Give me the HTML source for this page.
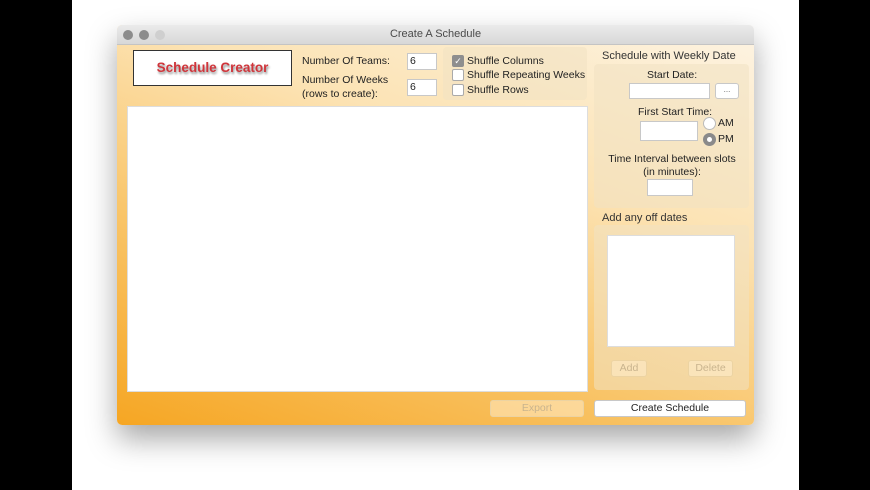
<!DOCTYPE html>
<html><head><style>
body{margin:0;width:870px;height:490px;background:#000;position:relative;overflow:hidden;font-family:"Liberation Sans",sans-serif;font-size:10.5px;color:#222}
.stage{position:absolute;left:72px;top:0;width:727px;height:490px;background:#fff}
.win{position:absolute;left:117px;top:25px;width:637px;height:400px;border-radius:5px;overflow:hidden;box-shadow:0 14px 30px rgba(0,0,0,.35);background:linear-gradient(20deg,#f6a623 0%,#f9c66c 35%,#fce3b4 65%,#fdf4e4 100%)}
.tb{position:absolute;left:0;top:0;width:637px;height:19px;background:linear-gradient(#ebebeb,#d8d8d8);border-bottom:1px solid #c4c4c4;text-align:center;line-height:19px;color:#4a4a4a;font-size:11px}
.dot{position:absolute;top:5px;width:10px;height:10px;border-radius:50%;background:#8c8c8c}
.a{position:absolute;white-space:nowrap}
.box{position:absolute;background:#fff;border:1px solid #c8c8c8}
.panel{position:absolute;background:rgba(240,225,195,.55);border-radius:4px}
.cb{position:absolute;width:10px;height:10px;border:1px solid #aaa;border-radius:2px;background:#fff}
.btn{position:absolute;background:#fff;border:1px solid #c8c8c8;border-radius:3px;text-align:center}
.dis{background:rgba(255,240,210,.5);color:#c9b48e;border-color:#ecd3a2}
</style></head><body>
<div class="stage"></div>
<div class="win">
 <div class="tb">Create A Schedule</div>
 <div class="dot" style="left:6px"></div><div class="dot" style="left:22px"></div><div class="dot" style="left:38px;background:#cfcfcf"></div>
 <div class="box" style="left:16px;top:25px;width:157px;height:34px;border:1px solid #333;text-align:center;line-height:34px;font-weight:bold;font-size:13.5px;color:#d0353b;text-shadow:1px 2px 2px rgba(0,0,0,.45)">Schedule Creator</div>
 <div class="a" style="left:185px;top:30px">Number Of Teams:</div>
 <div class="a" style="left:185px;top:48px;line-height:14px">Number Of Weeks<br>(rows to create):</div>
 <div class="box" style="left:290px;top:28px;width:26px;height:15px;line-height:15px;padding-left:2px">6</div>
 <div class="box" style="left:290px;top:54px;width:26px;height:15px;line-height:15px;padding-left:2px">6</div>
 <div class="panel" style="left:326px;top:22px;width:144px;height:53px"></div>
 <div class="cb" style="left:335px;top:30px;background:#8e8e8e;border-color:#8e8e8e;color:#fff;font-size:9px;line-height:10px;text-align:center">✓</div>
 <div class="a" style="left:350px;top:30px">Shuffle Columns</div>
 <div class="cb" style="left:335px;top:44px"></div><div class="a" style="left:350px;top:44px">Shuffle Repeating Weeks</div>
 <div class="cb" style="left:335px;top:59px"></div><div class="a" style="left:350px;top:59px">Shuffle Rows</div>
 <div class="box" style="left:10px;top:81px;width:459px;height:284px;border-color:#ddd"></div>
 <div class="a" style="left:485px;top:25px;font-size:11px;color:#333">Schedule with Weekly Date</div>
 <div class="panel" style="left:477px;top:39px;width:155px;height:144px"></div>
 <div class="a" style="left:530px;top:44px">Start Date:</div>
 <div class="box" style="left:512px;top:58px;width:79px;height:14px"></div>
 <div class="btn" style="left:598px;top:58px;width:22px;height:14px;font-size:8px;line-height:12px;color:#666">...</div>
 <div class="a" style="left:521px;top:81px">First Start Time:</div>
 <div class="box" style="left:523px;top:96px;width:56px;height:18px"></div>
 <div class="a" style="left:586px;top:92px;width:11px;height:11px;border-radius:50%;background:#fff;border:1px solid #bbb"></div>
 <div class="a" style="left:601px;top:92px">AM</div>
 <div class="a" style="left:586px;top:108px;width:11px;height:11px;border-radius:50%;background:#8a8a8a;border:1px solid #8a8a8a"><div class="a" style="left:3px;top:3px;width:5px;height:5px;border-radius:50%;background:#fff"></div></div>
 <div class="a" style="left:601px;top:108px">PM</div>
 <div class="a" style="left:485px;top:128px;text-align:center;width:140px;line-height:13px">Time Interval between slots<br>(in minutes):</div>
 <div class="box" style="left:530px;top:154px;width:44px;height:15px"></div>
 <div class="a" style="left:485px;top:187px;font-size:11px;color:#333">Add any off dates</div>
 <div class="panel" style="left:477px;top:200px;width:155px;height:165px"></div>
 <div class="box" style="left:490px;top:210px;width:126px;height:110px;border-color:#ddd"></div>
 <div class="btn dis" style="left:494px;top:335px;width:34px;height:15px;line-height:15px">Add</div>
 <div class="btn dis" style="left:571px;top:335px;width:43px;height:15px;line-height:15px">Delete</div>
 <div class="btn dis" style="left:373px;top:375px;width:92px;height:15px;line-height:15px">Export</div>
 <div class="btn" style="left:477px;top:375px;width:150px;height:15px;line-height:15px;color:#222">Create Schedule</div>
</div>
</body></html>
